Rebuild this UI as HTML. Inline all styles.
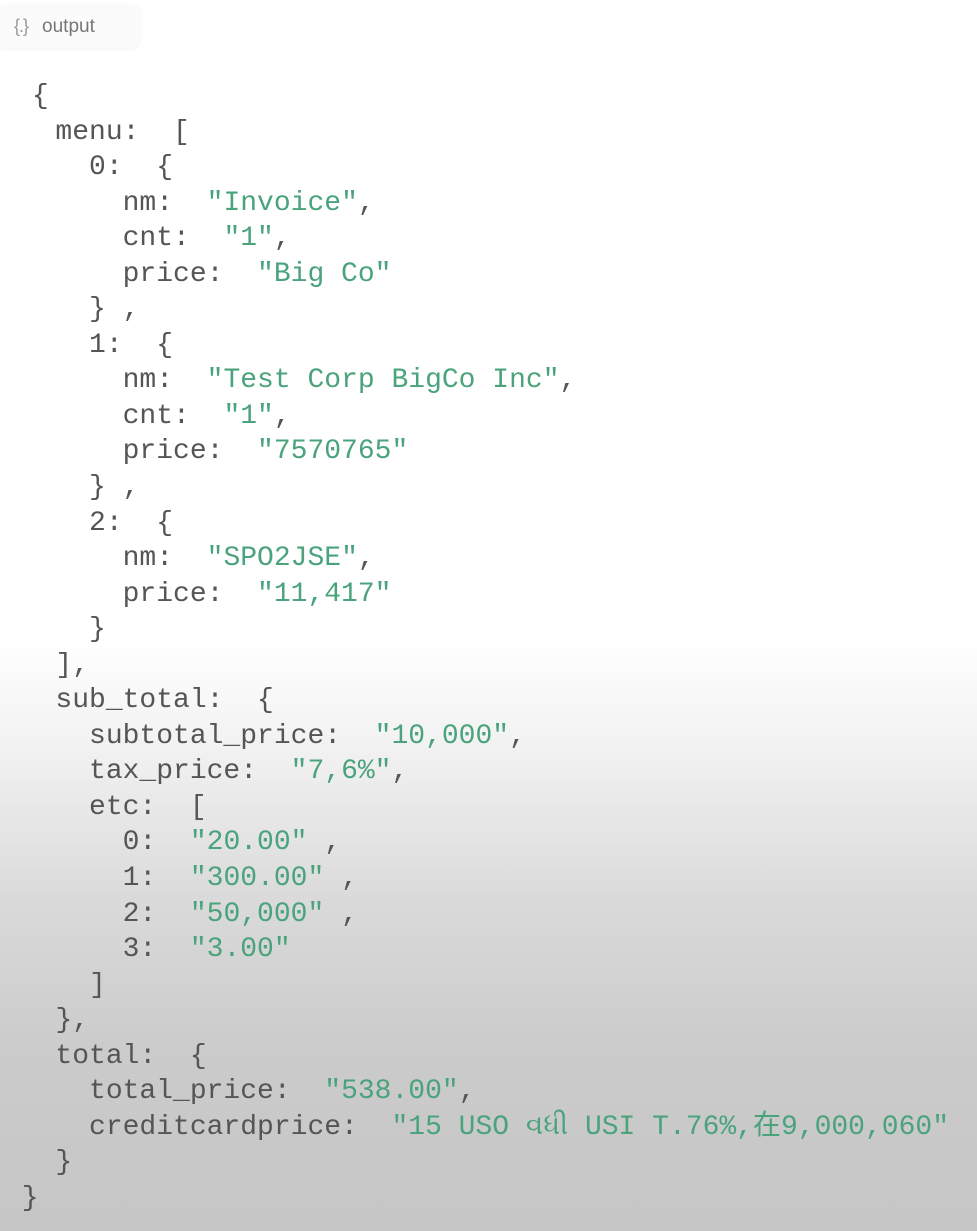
<!DOCTYPE html>
<html><head><meta charset="utf-8"><style>
html,body{margin:0;padding:0}
body{width:977px;height:1231px;overflow:hidden;position:relative;
background:linear-gradient(to bottom,#fff 0,#fff 640px,#f0f0f0 760px,#dadada 900px,#cbcbcb 1050px,#c6c6c6 1231px);}
.tab{position:absolute;left:0;top:4px;width:140px;height:44px;background:#fbfbfb;border-radius:0 8px 8px 0;box-shadow:0 1px 3px rgba(0,0,0,.06);
font:19px "Liberation Sans",sans-serif;color:#777;line-height:44px;}
.tab span{margin-left:14px;font-size:18px;letter-spacing:-1px;color:#999;margin-right:14px}
pre{position:absolute;left:5px;top:79px;margin:0;font:28px "Liberation Mono","Noto Sans CJK SC",monospace;line-height:35.55px;color:#555;}
.s{color:#4aa37b}
</style></head><body>
<div class="tab"><span>{.}</span>output</div>
<pre><span style="margin-left:27px">{</span>
   menu:  [
     0:  {
       nm:  <span class="s">"Invoice"</span>,
       cnt:  <span class="s">"1"</span>,
       price:  <span class="s">"Big Co"</span>
     } ,
     1:  {
       nm:  <span class="s">"Test Corp BigCo Inc"</span>,
       cnt:  <span class="s">"1"</span>,
       price:  <span class="s">"7570765"</span>
     } ,
     2:  {
       nm:  <span class="s">"SPO2JSE"</span>,
       price:  <span class="s">"11,417"</span>
     }
   ],
   sub_total:  {
     subtotal_price:  <span class="s">"10,000"</span>,
     tax_price:  <span class="s">"7,6%"</span>,
     etc:  [
       0:  <span class="s">"20.00"</span> ,
       1:  <span class="s">"300.00"</span> ,
       2:  <span class="s">"50,000"</span> ,
       3:  <span class="s">"3.00"</span>
     ]
   },
   total:  {
     total_price:  <span class="s">"538.00"</span>,
     creditcardprice:  <span class="s">"15 USO વધી USI T.76%,在9,000,060"</span>
   }
 }</pre>
</body></html>
